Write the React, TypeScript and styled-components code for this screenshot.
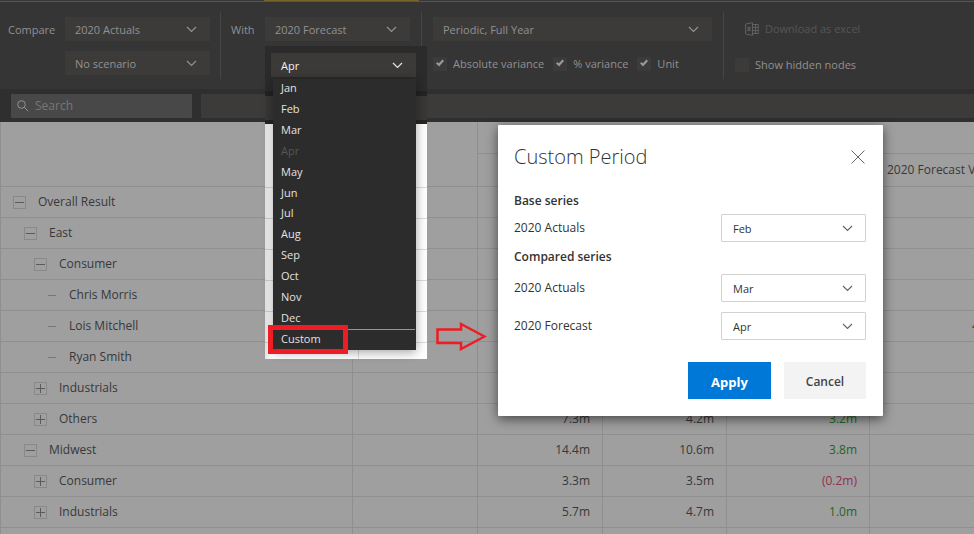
import React from "react";
import styled, { createGlobalStyle } from "styled-components";

const GlobalStyle = createGlobalStyle`
  *, *::before, *::after { box-sizing: border-box; }
  body {
    margin: 0;
    background: #9f9f9f;
    font-family: "Open Sans", "Noto Sans", sans-serif;
    font-size: 12px;
    line-height: 16px;
  }
  button, input, select { font: inherit; color: inherit; margin: 0; }
  ul { list-style: none; margin: 0; padding: 0; }
`;

const Page = styled.div`
  position: relative;
  height: 100vh;
  overflow: hidden;
`;

/* ---------- toolbar ---------- */

const TabStrip = styled.div`
  height: 2px;
  background: #555;
  border-top: 1px solid #393939;
`;

const ActiveTab = styled.div`
  position: absolute;
  top: 0;
  left: 264px;
  width: 155px;
  height: 1px;
  background: #77642b;
`;

const Toolbar = styled.header`
  display: flex;
  height: 87px;
  padding: 10px 0;
  background: #353535;
  color: #919191;
  font-size: 11px;
`;

const Group = styled.div<{ $left: number; $right: number; $last?: boolean }>`
  display: flex;
  align-items: flex-start;
  gap: 10px;
  padding: 5px ${(p) => p.$right}px 0 ${(p) => p.$left}px;
  border-right: ${(p) => (p.$last ? "0" : "1px solid #454545")};
  white-space: nowrap;
`;

const GroupLabel = styled.label<{ $width: number }>`
  width: ${(p) => p.$width}px;
  line-height: 26px;
`;

const Stack = styled.div<{ $gap: number }>`
  display: flex;
  flex-direction: column;
  gap: ${(p) => p.$gap}px;
`;

const SelectBox = styled.div<{ $width: number }>`
  display: grid;
  align-items: center;
  width: ${(p) => p.$width}px;
  > * { grid-area: 1 / 1; }
  > svg { justify-self: end; margin-right: 13px; pointer-events: none; }
`;

const DarkSelect = styled.select`
  appearance: none;
  width: 100%;
  height: 24px;
  padding: 1px 30px 0 10px;
  border: 0;
  border-radius: 0;
  background: #3d3b39;
`;

const Checks = styled.div`
  display: flex;
  gap: 9px;
`;

const CheckLabel = styled.label`
  display: grid;
  grid-template-columns: 14px auto;
  column-gap: 6px;
  align-items: center;
  height: 18px;
  > svg { grid-area: 1 / 1; justify-self: center; pointer-events: none; }
  > input { grid-area: 1 / 1; }
`;

const CheckInput = styled.input`
  appearance: none;
  width: 14px;
  height: 14px;
  background: #3d3b39;
`;

const DownloadButton = styled.button`
  display: flex;
  align-items: center;
  gap: 6px;
  height: 24px;
  padding: 0 0 0 10px;
  border: 0;
  background: none;
  color: #555;
`;

const FilterBar = styled.div`
  display: flex;
  gap: 9px;
  height: 33px;
  padding: 5px 0 4px 11px;
  background: #2f2f2f;
`;

const SearchBox = styled.label`
  display: flex;
  align-items: center;
  gap: 6px;
  width: 181px;
  padding: 0 0 0 6px;
  border-radius: 1px;
  background: #484848;
`;

const SearchInput = styled.input`
  width: 130px;
  border: 0;
  padding: 0;
  outline: 0;
  background: none;
  &::placeholder { color: #777; opacity: 1; }
`;

const FilterTrack = styled.div`
  flex: 1;
  background: #3d3b39;
`;

/* ---------- table ---------- */

const TableArea = styled.main`
  overflow: hidden;
  border-left: 1px solid #8f8f8f;
`;

const Grid = styled.table`
  table-layout: fixed;
  width: calc(100% + 39px);
  border-collapse: separate;
  border-spacing: 0;
  color: #383838;
`;

const HeadCell = styled.th<{ $size?: number }>`
  height: ${(p) => p.$size ?? 32}px;
  padding: 0 0 0 17px;
  border-right: 1px solid #8f8f8f;
  border-bottom: 1px solid #8f8f8f;
  text-align: left;
  font-weight: 400;
  white-space: nowrap;
`;

const Cell = styled.td<{ $tone?: string }>`
  height: 31px;
  padding: 0 12px 0 0;
  border-right: 1px solid #8f8f8f;
  border-bottom: 1px solid #8f8f8f;
  text-align: right;
  color: ${(p) => (p.$tone === "up" ? "#1f651f" : p.$tone === "down" ? "#922f4b" : "#383838")};
`;

const NameCell = styled.th<{ $indent: number }>`
  height: 31px;
  padding: 0 0 0 ${(p) => p.$indent}px;
  border-right: 1px solid #8f8f8f;
  border-bottom: 1px solid #8f8f8f;
  text-align: left;
  font-weight: 400;
`;

const NodeLine = styled.div`
  display: flex;
  align-items: center;
  gap: 12px;
`;

const Toggle = styled.button`
  display: grid;
  place-items: center;
  width: 13px;
  height: 13px;
  padding: 0;
  border: 1px solid #898989;
  background: none;
`;

const LeafMark = styled.span`
  width: 13px;
  padding: 0 1px 0 4px;
  &::before { content: ""; display: block; height: 1px; background: #777; }
`;

/* ---------- highlighted month picker ---------- */

const Spotlight = styled.section`
  position: absolute;
  top: 46px;
  left: 265px;
  width: 162px;
  height: 313px;
  padding: 7px 11px 9px 6px;
  background:
    linear-gradient(90deg, #0000001c, #00000000 6px) 0 78px no-repeat,
    linear-gradient(#dcdcdc, #dcdcdc) 93px 78px / 1px 235px no-repeat,
    linear-gradient(#2b2b2b 45px, #232323 45px 50px, #3a3836 50px 74px, #252525 74px 78px, #fff 78px 140px, #ffffff00 140px),
    repeating-linear-gradient(#fff 0 30px, #dcdcdc 30px 31px) 0 18px;
  color: #f0f0f0;
  font-size: 11px;
`;

const MonthButton = styled.button`
  display: flex;
  align-items: center;
  justify-content: space-between;
  width: 100%;
  height: 24px;
  padding: 1px 13px 0 10px;
  border: 0;
  background: #3b3a39;
`;

const Menu = styled.ul`
  display: grid;
  grid-template-rows: repeat(12, 1fr) 21px;
  height: 271px;
  margin: 2px 0 0 2px;
  background: #2c2c2c;
  box-shadow: 0 2px 10px #00000060;
`;

const MenuItem = styled.li<{ $ruled?: boolean }>`
  display: grid;
  margin-right: 1px;
  border-top: ${(p) => (p.$ruled ? "1px solid #959595" : "0")};
`;

const MenuButton = styled.button`
  padding: 0 8px 3px;
  border: 0;
  background: none;
  text-align: left;
  line-height: 15px;
  color: #e2e2e2;
  &:disabled { color: #555; }
`;

const MarkBox = styled.div`
  position: absolute;
  top: 325px;
  left: 268px;
  width: 80px;
  height: 29px;
  border: 5px solid #ee1c25;
  pointer-events: none;
`;

const MarkArrow = styled.svg`
  position: absolute;
  top: 321px;
  left: 435px;
`;

/* ---------- dialog ---------- */

const Dialog = styled.section`
  position: absolute;
  top: 125px;
  left: 498px;
  width: 385px;
  padding: 16px 17px 17px 16px;
  border-radius: 1px;
  background: #fff;
  color: #333;
  box-shadow: 0 3px 12px #00000090;
`;

const DialogHeader = styled.div`
  display: flex;
  align-items: center;
  justify-content: space-between;
  height: 32px;
  margin-bottom: 17px;
`;

const Title = styled.h2`
  margin: 0;
  font-size: 20px;
  line-height: 32px;
  font-weight: 300;
`;

const CloseButton = styled.button`
  display: grid;
  place-items: center;
  width: 16px;
  height: 16px;
  padding: 0;
  border: 0;
  background: none;
`;

const SeriesTitle = styled.h3<{ $after: number }>`
  margin: 0 0 ${(p) => p.$after}px;
  font-size: 12px;
  line-height: 22px;
  font-weight: 600;
`;

const SeriesRow = styled.div<{ $after: number }>`
  display: flex;
  align-items: center;
  justify-content: space-between;
  height: 28px;
  margin-bottom: ${(p) => p.$after}px;
`;

const LightSelect = styled.select`
  appearance: none;
  width: 100%;
  height: 28px;
  padding: 1px 30px 0 11px;
  border: 1px solid #d2d2d2;
  border-radius: 1px;
  background: #fff;
  font-size: 11px;
`;

const Actions = styled.div`
  display: flex;
  justify-content: flex-end;
  gap: 13px;
`;

const ActionButton = styled.button<{ $primary?: boolean }>`
  width: ${(p) => (p.$primary ? 83 : 82)}px;
  height: 37px;
  padding: 3px 0 0;
  border: 0;
  font-size: ${(p) => (p.$primary ? 13 : 12)}px;
  font-weight: ${(p) => (p.$primary ? 700 : 600)};
  background: ${(p) => (p.$primary ? "#0078d7" : "#f3f3f3")};
  color: ${(p) => (p.$primary ? "#fff" : "#444")};
`;

/* ---------- drawings ---------- */

const Chevron = ({ color = "#929292" }: { color?: string }) => (
  <svg width="11" height="7" viewBox="0 0 11 7" fill="none" stroke={color} strokeWidth="1.2" aria-hidden="true">
    <path d="M1 1l4.500 4.500L10 1" />
  </svg>
);

const Tick = () => (
  <svg width="8" height="10" viewBox="0 0 8 10" fill="none" stroke="#999" strokeWidth="2.200" aria-hidden="true">
    <path d="M.8 3.800l2.200 2.200L7.200 1.200" />
  </svg>
);

const SearchIcon = () => (
  <svg width="12" height="12" viewBox="0 0 12 12" fill="none" stroke="#929292" aria-hidden="true">
    <circle cx="4.500" cy="4.500" r="3.800" />
    <path d="M7.300 7.300l4 4" />
  </svg>
);

const ExcelIcon = () => (
  <svg width="14" height="14" viewBox="0 0 14 14" fill="none" stroke="#606060" aria-hidden="true">
    <path d="M.6 2L7.500.7v12.600L.6 12z" />
    <path d="M2.500 4.800l3 4.400M5.500 4.800l-3 4.400" strokeWidth="1.200" />
    <path d="M7.500 2.500h5.800v9H7.500M8 5.500h5M8 8.500h5M10.500 3v8" />
  </svg>
);

type SelectProps = { label: string; value: string; width: number; id?: string };

const ToolbarSelect = ({ label, value, width, id }: SelectProps) => (
  <SelectBox $width={width}>
    <DarkSelect id={id} aria-label={label} defaultValue={value}>
      <option>{value}</option>
    </DarkSelect>
    <Chevron />
  </SelectBox>
);

const Check = ({ label, checked }: { label: string; checked?: boolean }) => (
  <CheckLabel>
    <CheckInput type="checkbox" defaultChecked={checked} />
    {checked && <Tick />}
    <span>{label}</span>
  </CheckLabel>
);

const PeriodRow = ({ id, name, month, after }: { id: string; name: string; month: string; after: number }) => (
  <SeriesRow $after={after}>
    <label htmlFor={id}>{name}</label>
    <SelectBox $width={145}>
      <LightSelect id={id} defaultValue={month}>
        <option>{month}</option>
      </LightSelect>
      <Chevron color="#666" />
    </SelectBox>
  </SeriesRow>
);

/* ---------- data ---------- */

const indents = [12, 23, 33, 43];
const months = ["Jan", "Feb", "Mar", "Apr", "May", "Jun", "Jul", "Aug", "Sep", "Oct", "Nov", "Dec"];

type Row = {
  name: string;
  level: number;
  mark: "open" | "closed" | "leaf";
  base?: string;
  compared?: string;
  delta?: string;
  tone?: string;
  next?: string;
};

const rows: Row[] = [
  { name: "Overall Result", level: 0, mark: "open" },
  { name: "East", level: 1, mark: "open" },
  { name: "Consumer", level: 2, mark: "open" },
  { name: "Chris Morris", level: 3, mark: "leaf" },
  { name: "Lois Mitchell", level: 3, mark: "leaf", next: "4.1m" },
  { name: "Ryan Smith", level: 3, mark: "leaf" },
  { name: "Industrials", level: 2, mark: "closed" },
  { name: "Others", level: 2, mark: "closed", base: "7.3m", compared: "4.2m", delta: "3.2m", tone: "up" },
  { name: "Midwest", level: 1, mark: "open", base: "14.4m", compared: "10.6m", delta: "3.8m", tone: "up" },
  { name: "Consumer", level: 2, mark: "closed", base: "3.3m", compared: "3.5m", delta: "(0.2m)", tone: "down" },
  { name: "Industrials", level: 2, mark: "closed", base: "5.7m", compared: "4.7m", delta: "1.0m", tone: "up" },
];

export default function App() {
  return (
    <Page>
      <GlobalStyle />
      <TabStrip />
      <ActiveTab />
      <Toolbar>
        <Group $left={8} $right={10}>
          <GroupLabel $width={47} htmlFor="compare">Compare</GroupLabel>
          <Stack $gap={10}>
            <ToolbarSelect id="compare" label="Compare" value="2020 Actuals" width={145} />
            <ToolbarSelect label="Scenario" value="No scenario" width={145} />
          </Stack>
        </Group>
        <Group $left={10} $right={11}>
          <GroupLabel $width={24} htmlFor="with">With</GroupLabel>
          <ToolbarSelect id="with" label="With" value="2020 Forecast" width={145} />
        </Group>
        <Group $left={11} $right={11}>
          <Stack $gap={14}>
            <ToolbarSelect label="Period" value="Periodic, Full Year" width={279} />
            <Checks>
              <Check label="Absolute variance" checked />
              <Check label="% variance" checked />
              <Check label="Unit" checked />
            </Checks>
          </Stack>
        </Group>
        <Group $left={11} $right={0} $last>
          <Stack $gap={15}>
            <DownloadButton type="button" disabled>
              <ExcelIcon />
              Download as excel
            </DownloadButton>
            <Check label="Show hidden nodes" />
          </Stack>
        </Group>
      </Toolbar>
      <FilterBar>
        <SearchBox>
          <SearchIcon />
          <SearchInput type="text" placeholder="Search" aria-label="Search" />
        </SearchBox>
        <FilterTrack />
      </FilterBar>

      <TableArea>
        <Grid>
          <colgroup>
            <col style={{ width: 352 }} />
            <col style={{ width: 125 }} />
            <col style={{ width: 125 }} />
            <col style={{ width: 124 }} />
            <col style={{ width: 143 }} />
            <col />
          </colgroup>
          <thead>
            <tr>
              <HeadCell rowSpan={2} $size={64} />
              <HeadCell rowSpan={2} $size={64} />
              <HeadCell colSpan={4} />
            </tr>
            <tr>
              <HeadCell $size={33} />
              <HeadCell $size={33} />
              <HeadCell $size={33} />
              <HeadCell $size={33}>2020 Forecast Variance</HeadCell>
            </tr>
          </thead>
          <tbody>
            {rows.map((row, i) => (
              <tr key={i}>
                <NameCell scope="row" $indent={indents[row.level]}>
                  <NodeLine>
                    {row.mark === "leaf" ? (
                      <LeafMark />
                    ) : (
                      <Toggle type="button" aria-label={`Toggle ${row.name}`}>
                        <svg width="9" height="9" viewBox="0 0 9 9" stroke="#5a5a5a" aria-hidden="true">
                          <path d={row.mark === "open" ? "M0 4.500h9" : "M0 4.500h9M4.500 0v9"} />
                        </svg>
                      </Toggle>
                    )}
                    {row.name}
                  </NodeLine>
                </NameCell>
                <Cell />
                <Cell>{row.base}</Cell>
                <Cell>{row.compared}</Cell>
                <Cell $tone={row.tone}>{row.delta}</Cell>
                <Cell $tone="up">{row.next}</Cell>
              </tr>
            ))}
            <tr>
              <Cell />
              <Cell />
              <Cell />
              <Cell />
              <Cell />
              <Cell />
            </tr>
          </tbody>
        </Grid>
      </TableArea>

      <Spotlight>
        <MonthButton type="button" aria-haspopup="menu" aria-expanded="true">
          Apr
          <Chevron color="#e6e6e6" />
        </MonthButton>
        <Menu>
          {months.map((month) => (
            <MenuItem key={month}>
              <MenuButton type="button" disabled={month === "Apr"}>{month}</MenuButton>
            </MenuItem>
          ))}
          <MenuItem $ruled>
            <MenuButton type="button">Custom</MenuButton>
          </MenuItem>
        </Menu>
      </Spotlight>

      <MarkBox />
      <MarkArrow width="52" height="30" viewBox="0 0 52 30" fill="none" stroke="#ee1c25" strokeWidth="2.500" aria-hidden="true">
        <path d="M2.500 8.500H26V3l23.500 12.500L26 28v-6H2.500z" />
      </MarkArrow>

      <Dialog role="dialog" aria-labelledby="period-title">
        <DialogHeader>
          <Title id="period-title">Custom Period</Title>
          <CloseButton type="button" aria-label="Close">
            <svg width="14" height="14" viewBox="0 0 14 14" stroke="#666" aria-hidden="true">
              <path d="M.5.5l13 13M13.500.5l-13 13" />
            </svg>
          </CloseButton>
        </DialogHeader>
        <SeriesTitle $after={2}>Base series</SeriesTitle>
        <PeriodRow id="base-actuals" name="2020 Actuals" month="Feb" after={4} />
        <SeriesTitle $after={6}>Compared series</SeriesTitle>
        <PeriodRow id="compared-actuals" name="2020 Actuals" month="Mar" after={10} />
        <PeriodRow id="compared-forecast" name="2020 Forecast" month="Apr" after={22} />
        <Actions>
          <ActionButton type="button" $primary>Apply</ActionButton>
          <ActionButton type="button">Cancel</ActionButton>
        </Actions>
      </Dialog>
    </Page>
  );
}
